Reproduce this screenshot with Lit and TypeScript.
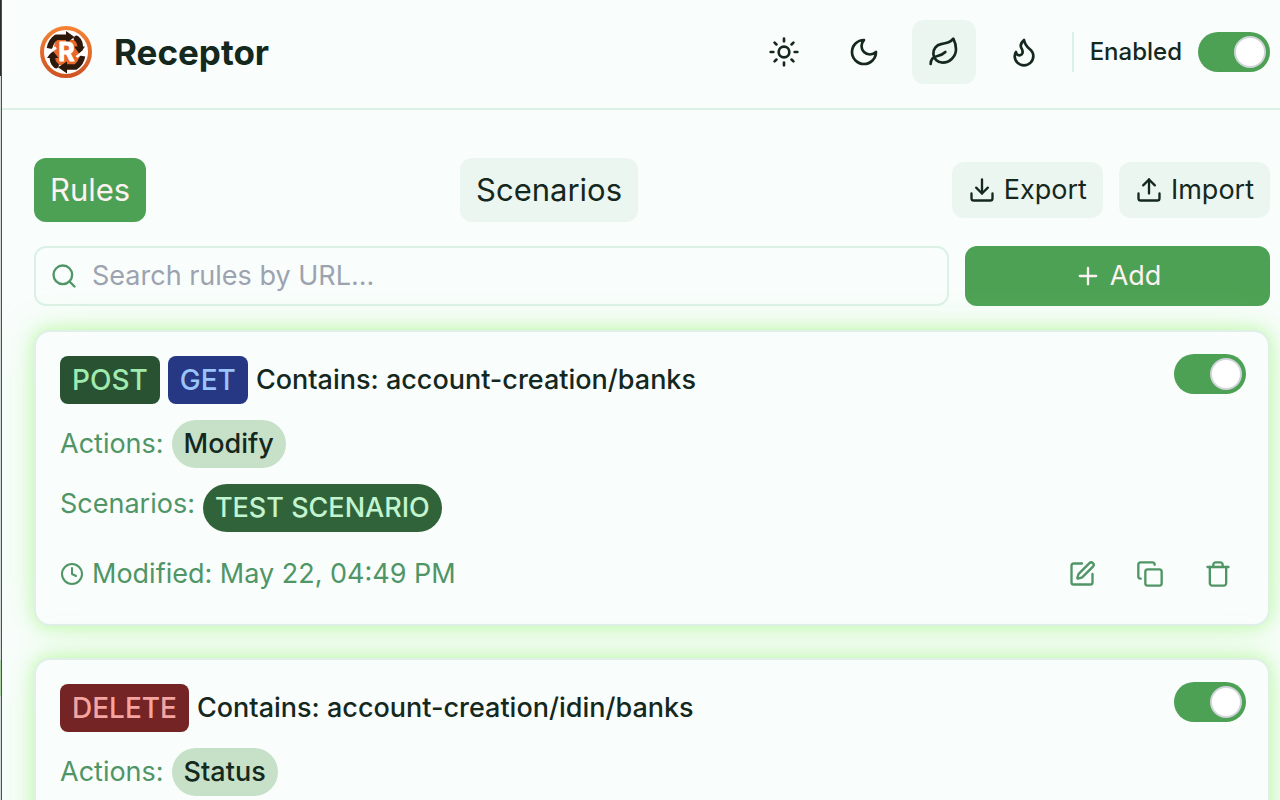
import { LitElement, html, css, svg } from "lit";
import { customElement, property, state } from "lit/decorators.js";
import { classMap } from "lit/directives/class-map.js";

const icons: Record<string, unknown> = {
  sun: svg`<circle cx="12" cy="12" r="4"/><path d="M12 2v2M12 20v2M4.93 4.93l1.41 1.41M17.66 17.66l1.41 1.41M2 12h2M20 12h2M6.34 17.66l-1.41 1.41M19.07 4.93l-1.41 1.41"/>`,
  moon: svg`<path d="M12 3a6 6 0 0 0 9 9 9 9 0 1 1-9-9Z"/>`,
  leaf: svg`<path d="M11 20A7 7 0 0 1 9.8 6.1C15.5 5 17 4.48 19 2c1 2 2 4.18 2 8 0 5.5-4.78 10-10 10Z"/><path d="M2 21c0-3 1.85-5.36 5.08-6C9.5 14.52 12 13 13 12"/>`,
  flame: svg`<path d="M8.5 14.5A2.5 2.5 0 0 0 11 12c0-1.38-.5-2-1-3-1.072-2.143-.224-4.054 2-6 .5 2.5 2 4.9 4 6.5 2 1.6 3 3.5 3 5.5a7 7 0 1 1-14 0c0-1.153.433-2.294 1-3a2.5 2.5 0 0 0 2.5 2.5z"/>`,
  download: svg`<path d="M21 15v4a2 2 0 0 1-2 2H5a2 2 0 0 1-2-2v-4"/><path d="m7 10 5 5 5-5"/><path d="M12 15V3"/>`,
  upload: svg`<path d="M21 15v4a2 2 0 0 1-2 2H5a2 2 0 0 1-2-2v-4"/><path d="m17 8-5-5-5 5"/><path d="M12 3v12"/>`,
  search: svg`<circle cx="11" cy="11" r="8"/><path d="m21 21-4.3-4.3"/>`,
  plus: svg`<path d="M5 12h14M12 5v14"/>`,
  clock: svg`<circle cx="12" cy="12" r="10"/><path d="M12 6v6l4 2"/>`,
  edit: svg`<path d="M12 3H5a2 2 0 0 0-2 2v14a2 2 0 0 0 2 2h14a2 2 0 0 0 2-2v-7"/><path d="M18.375 2.625a1 1 0 0 1 3 3l-9.013 9.014a2 2 0 0 1-.853.505l-2.873.84a.5.5 0 0 1-.62-.62l.84-2.873a2 2 0 0 1 .506-.852z"/>`,
  copy: svg`<rect x="8" y="8" width="14" height="14" rx="2"/><path d="M4 16c-1.1 0-2-.9-2-2V4c0-1.1.9-2 2-2h10c1.1 0 2 .9 2 2"/>`,
  trash: svg`<path d="M3 6h18"/><path d="M19 6v14c0 1-1 2-2 2H7c-1 0-2-1-2-2V6"/><path d="M8 6V4c0-1 1-2 2-2h4c1 0 2 1 2 2v2"/>`,
};

const icon = (name: string, size: number) => html`<svg
  width=${size}
  height=${size}
  viewBox="0 0 24 24"
  fill="none"
  stroke="currentColor"
  stroke-width="2"
  stroke-linecap="round"
  stroke-linejoin="round"
  aria-hidden="true"
>${icons[name]}</svg>`;

const base = css`
  *, *::before { box-sizing: border-box; }
  svg { display: block; flex: none; }
  button { font: inherit; color: inherit; border: 0; background: none; padding: 0; cursor: pointer; }
`;

@customElement("toggle-switch")
class ToggleSwitch extends LitElement {
  @property({ type: Boolean }) checked = true;
  @property() label = "";

  static styles = [base, css`
    :host { display: block; flex: none; }
    .switch {
      appearance: none; display: flex; align-items: center; justify-content: flex-start;
      width: 72px; height: 40px; margin: 0; padding: 4px;
      border-radius: 20px; background: #b9c7be; cursor: pointer;
    }
    .switch:checked { justify-content: flex-end; background: #4da154; }
    .switch::before {
      content: ""; width: 32px; height: 32px; border-radius: 50%;
      background: #fff; border: 2px solid #d1d5db;
    }
  `];

  render() {
    return html`<input class="switch" type="checkbox" role="switch" aria-label=${this.label}
      .checked=${this.checked}
      @change=${(e: Event) => (this.checked = (e.target as HTMLInputElement).checked)} />`;
  }
}

interface Rule {
  methods: string[];
  match: string;
  actions: string[];
  scenarios: string[];
  modified: string;
}

@customElement("rule-card")
class RuleCard extends LitElement {
  @property({ attribute: false }) rule!: Rule;

  static styles = [base, css`
    :host {
      display: block; padding: 24px 22px 24px 24px; border: 2px solid #e0efe8; border-radius: 16px;
      background: #f9fdfc; box-shadow: 0 0 16px #b3f99acc, 0 0 40px #b3f99a66;
    }
    .top { display: flex; align-items: flex-start; justify-content: space-between; }
    .body { display: flex; flex-direction: column; gap: 16px; }
    .line { display: flex; align-items: center; gap: 8px; }
    .scenarios { align-items: flex-start; }
    .scenarios .label { line-height: 40px; }
    .label, .footer { color: #4f9566; }
    .match { font-weight: 500; }
    .badge { padding: 0 12px; font-size: 28px; line-height: 48px; border-radius: 8px; font-weight: 500; }
    .post { background: #285231; color: #a0ebb0; }
    .get { background: #263783; color: #9ac4fa; }
    .delete { background: #742424; color: #f4a5a2; }
    .pill { padding: 0 12px; line-height: 48px; border-radius: 24px; font-weight: 500; background: #c6e1c8; }
    .scenario { background: #30633a; color: #c2f5cf; }
    .toggle { margin-top: -2px; }
    .footer { display: flex; align-items: center; justify-content: space-between; margin-top: 16px; }
    .modified { display: flex; align-items: center; gap: 8px; }
    .tools { display: flex; gap: 12px; }
    .tool { display: flex; align-items: center; justify-content: center; width: 56px; height: 52px; }
  `];

  render() {
    const r = this.rule;
    return html`
      <div class="top">
        <div class="body">
          <div class="line">
            ${r.methods.map((m) => html`<span class="badge ${m.toLowerCase()}">${m}</span>`)}
            <span class="match">Contains: ${r.match}</span>
          </div>
          <div class="line">
            <span class="label">Actions:</span>
            ${r.actions.map((a) => html`<span class="pill">${a}</span>`)}
          </div>
          <div class="line scenarios">
            <span class="label">Scenarios:</span>
            ${r.scenarios.map((s) => html`<span class="pill scenario">${s}</span>`)}
          </div>
        </div>
        <toggle-switch class="toggle" label="Rule enabled"></toggle-switch>
      </div>
      <div class="footer">
        <span class="modified">${icon("clock", 24)}Modified: ${r.modified}</span>
        <div class="tools">
          <button class="tool" aria-label="Edit">${icon("edit", 28)}</button>
          <button class="tool" aria-label="Duplicate">${icon("copy", 28)}</button>
          <button class="tool" aria-label="Delete">${icon("trash", 28)}</button>
        </div>
      </div>
    `;
  }
}

@customElement("app-root")
class AppRoot extends LitElement {
  @state() private theme = "leaf";
  @state() private tab = "Rules";

  private rules: Rule[] = [
    { methods: ["POST", "GET"], match: "account-creation/banks", actions: ["Modify"], scenarios: ["TEST SCENARIO"], modified: "May 22, 04:49 PM" },
    { methods: ["DELETE"], match: "account-creation/idin/banks", actions: ["Status"], scenarios: ["TEST SCENARIO"], modified: "May 22, 04:49 PM" },
  ];

  static styles = [base, css`
    :host {
      display: block; box-sizing: border-box; height: 100vh; overflow-y: auto; scrollbar-width: none;
      padding-left: 2px; color: #14281d;
      background:
        linear-gradient(#2c2b30 76px, #d3dad8 76px 660px, #a9d3a2 660px 696px, #d3dad8 696px) 0 0 / 1px 100% no-repeat,
        linear-gradient(#4b4f4e, #4b4f4e) 1px 0 / 1px 100% no-repeat,
        #f9fdfc;
      font: 400 27px/40px Inter, "Liberation Sans", sans-serif;
    }
    .header {
      display: flex; align-items: center; justify-content: space-between;
      padding: 20px 10px 24px 38px; border-bottom: 2px solid #dcf1e6;
    }
    .brand { display: flex; align-items: center; gap: 22px; }
    .title { margin: 0; font-size: 35px; line-height: 40px; font-weight: 700; }
    .controls { display: flex; align-items: center; gap: 16px; }
    .theme { display: flex; align-items: center; justify-content: center; width: 64px; height: 64px; border-radius: 12px; }
    .theme.active { background: #ecf6f1; }
    .power {
      display: flex; align-items: center; gap: 16px; padding-left: 16px;
      border-left: 2px solid #dcf1e6; font-size: 24px; font-weight: 500;
    }
    .main { padding: 48px 10px 32px 32px; }
    .bar { display: flex; align-items: center; justify-content: space-between; }
    .tab { height: 64px; padding: 0 16px; border-radius: 12px; font-size: 31px; background: #ecf6f1; }
    .tab.active { background: #4da154; color: #fdf2f2; }
    .files { display: flex; gap: 16px; }
    .file { display: flex; align-items: center; gap: 8px; height: 56px; padding: 0 16px; border-radius: 12px; background: #ecf6f1; }
    .find { display: grid; grid-template-columns: 3fr 1fr; gap: 16px; margin: 24px 0; }
    .search {
      display: flex; align-items: center; gap: 14px; height: 60px; padding: 0 14px;
      border: 2px solid #dcf1e6; border-radius: 12px; color: #4f9566;
    }
    .input { flex: 1; min-width: 0; padding: 0; border: 0; outline: 0; background: none; font: inherit; color: #14281d; }
    .input::placeholder { color: #9ca3af; opacity: 1; }
    .add { display: flex; align-items: center; justify-content: center; gap: 8px; border-radius: 12px; background: #4da154; color: #fdf2f2; }
    .list { display: flex; flex-direction: column; gap: 32px; }
    .letter { font: 700 25px Inter, "Liberation Sans", sans-serif; }
  `];

  private logo() {
    return html`<svg width="52" height="52" viewBox="0 0 52 52" role="img" aria-label="Receptor logo">
      <defs><linearGradient id="ring" x1="0" y1="0" x2="0" y2="1"><stop offset="0" stop-color="#f58234"/><stop offset="1" stop-color="#cf5423"/></linearGradient></defs>
      <circle cx="26" cy="26" r="24" fill="#fff" stroke="url(#ring)" stroke-width="4"/>
      <path d="M16 14h19l5 8-1 12-5 5H18l-6-8 2-11z" fill="#e8672b"/>
      <g fill="none" stroke="#2d190c" stroke-width="5.6" stroke-linejoin="round">
        <path d="M9.500 22.500c.8-5 3.500-9 7-11.300h11"/>
        <path d="M36.500 12.500c3 2.500 4 5.500 3.700 10" stroke-linecap="round"/>
        <path d="M42.500 30c-.8 5-3.500 8.500-7 11h-9"/>
        <path d="M16 39.500c-3-2.500-4-5.500-3.300-9" stroke-linecap="round"/>
      </g>
      <g fill="#2d190c">
        <path d="M26 5l8.500 6L26 17.500z"/><path d="M34 20.500h11l-5.500 7.500z"/>
        <path d="M27 35.500V47.500l-9-6.300z"/><path d="M7 32l5.500-7.500 6 7.500z"/>
      </g>
      <path d="M7 28l9-6.500M36.500 31l8.500-6.500" stroke="#fff" stroke-width="2.800"/>
      <text class="letter" x="26.500" y="35" text-anchor="middle" fill="#fff" stroke="#fff" stroke-width=".8">R</text>
    </svg>`;
  }

  render() {
    return html`
      <header class="header">
        <div class="brand">${this.logo()}<h1 class="title">Receptor</h1></div>
        <div class="controls">
          ${["sun", "moon", "leaf", "flame"].map((t) => html`<button
            class=${classMap({ theme: true, active: this.theme === t })}
            aria-label="${t} theme"
            @click=${() => (this.theme = t)}>${icon(t, 32)}</button>`)}
          <div class="power"><span>Enabled</span><toggle-switch label="Enabled"></toggle-switch></div>
        </div>
      </header>
      <main class="main">
        <div class="bar">
          ${["Rules", "Scenarios"].map((t) => html`<button
            class=${classMap({ tab: true, active: this.tab === t })}
            @click=${() => (this.tab = t)}>${t}</button>`)}
          <div class="files">
            <button class="file">${icon("download", 28)}Export</button>
            <button class="file">${icon("upload", 28)}Import</button>
          </div>
        </div>
        <div class="find">
          <label class="search">${icon("search", 28)}<input class="input" type="text" aria-label="Search rules by URL" placeholder="Search rules by URL..." /></label>
          <button class="add">${icon("plus", 28)}Add</button>
        </div>
        <div class="list">${this.rules.map((r) => html`<rule-card .rule=${r}></rule-card>`)}</div>
      </main>
    `;
  }
}
